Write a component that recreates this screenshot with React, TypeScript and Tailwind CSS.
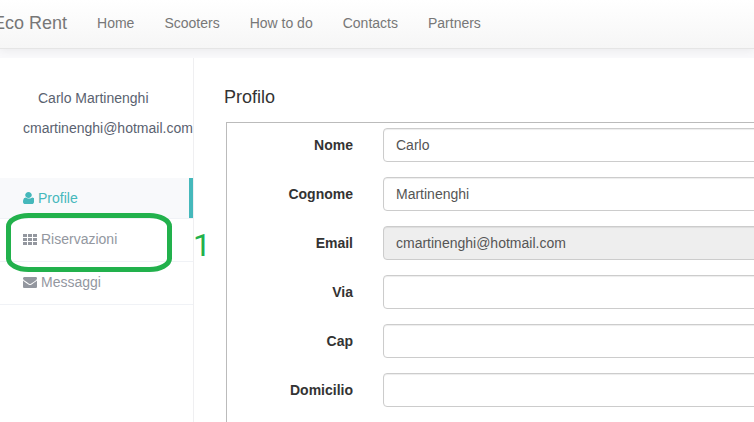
import type { ReactNode } from 'react';

const navLinks = ['Home', 'Scooters', 'How to do', 'Contacts', 'Partners'];

const fields = [
  { id: 'nome', label: 'Nome', value: 'Carlo' },
  { id: 'cognome', label: 'Cognome', value: 'Martinenghi' },
  { id: 'email', label: 'Email', value: 'cmartinenghi@hotmail.com', readOnly: true },
  { id: 'via', label: 'Via', value: '' },
  { id: 'cap', label: 'Cap', value: '' },
  { id: 'domicilio', label: 'Domicilio', value: '' },
];

function UserIcon() {
  return (
    <svg className="h-3 w-[11px]" viewBox="128 128 1280 1536" preserveAspectRatio="none" fill="currentColor" aria-hidden="true">
      <path d="M1408 1405q0 120-73 189.5t-194 69.5h-746q-121 0-194-69.5t-73-189.5q0-53 3.5-103.5t14-109 26.5-108.5 43-97.5 62-81 85.5-53.5 111.5-20q9 0 42 21.5t74.5 48 108 48 133.5 21.5 133.5-21.5 108-48 74.5-48 42-21.5q61 0 111.5 20t85.5 53.5 62 81 43 97.5 26.5 108.5 14 109 3.5 103.5zm-256-893q0 159-112.5 271.5t-271.5 112.5-271.5-112.5-112.5-271.5 112.5-271.5 271.5-112.5 271.5 112.5 112.5 271.5z" />
    </svg>
  );
}

function GridIcon() {
  return (
    <svg className="h-[11px] w-3.5" viewBox="0 0 14 11" fill="currentColor" aria-hidden="true">
      {[0, 4, 8].map((y) =>
        [0, 5, 10].map((x) => <rect key={`${x}-${y}`} x={x} y={y} width="4" height="3" />),
      )}
    </svg>
  );
}

function EnvelopeIcon() {
  return (
    <svg className="h-[11px] w-3.5" viewBox="0 256 1792 1408" fill="currentColor" aria-hidden="true">
      <path d="M1792 710v794q0 66-47 113t-113 47h-1472q-66 0-113-47t-47-113v-794q44 49 101 87 362 246 497 345 57 42 92.5 65.5t94.5 48 110 24.5h2q51 0 110-24.5t94.5-48 92.5-65.5q170-123 498-345 57-39 100-87zm0-294q0 79-49 151t-122 123q-376 261-468 325-10 7-42.5 31t-54 38.5-52 32.5-57.5 27-50 9h-2q-23 0-50-9t-57.5-27-52-32.5-54-38.5-42.5-31q-91-64-262-182.5t-205-142.5q-62-42-117-115.5t-55-136.5q0-78 41.5-130t118.5-52h1472q65 0 112.5 47t47.5 113z" />
    </svg>
  );
}

function MenuItem({ icon, label, active }: { icon: ReactNode; label: string; active?: boolean }) {
  return (
    <li className="border-b border-[#f0f2f6]">
      <a
        href="#"
        className={
          active
            ? 'flex h-10 items-center gap-1 border-r-4 border-[#45b8bb] bg-[#f8f9fb] pl-[23px] text-[#45b8bb]'
            : 'flex h-[42px] items-center gap-1 pb-0.5 pl-[23px] text-[#93979f]'
        }
      >
        {icon}
        {label}
      </a>
    </li>
  );
}

export default function App() {
  return (
    <div className="flex h-screen flex-col overflow-hidden bg-[#f9f9fb] font-['Liberation_Sans',Arial,sans-serif] text-sm text-[#333]">
      <header className="shrink-0 border-b border-[#e5e5e5] bg-linear-to-b from-white to-[#f6f6f6] shadow-[0_2px_8px_rgba(0,0,0,0.06)]">
        <nav className="-ml-[22px] flex h-12 items-center pb-0.5 text-[#777]">
          <a href="#" className="px-[15px] text-lg leading-5">Eco Rent</a>
          {navLinks.map((link) => (
            <a key={link} href="#" className="px-[15px] leading-5">{link}</a>
          ))}
        </nav>
      </header>

      <div className="mt-[9px] flex min-h-0 flex-1">
        <aside className="relative w-[194px] shrink-0 border-r border-[#efeff1] bg-white">
          <div className="pt-[30px] pb-10 text-[#5a6270]">
            <p className="pl-[38px] leading-5">Carlo Martinenghi</p>
            <p className="mt-2.5 pl-[23px] leading-5">cmartinenghi@hotmail.com</p>
          </div>
          <ul>
            <MenuItem icon={<UserIcon />} label="Profile" active />
            <MenuItem icon={<GridIcon />} label="Riservazioni" />
            <MenuItem icon={<EnvelopeIcon />} label="Messaggi" />
          </ul>
          <svg className="pointer-events-none absolute top-[155px] left-1.5 h-[59px] w-[166px]" viewBox="0 0 166 59" fill="none" aria-hidden="true">
            <rect x="2.5" y="2.5" width="161" height="54" rx="20" ry="11" stroke="#22b14c" strokeWidth="5" />
          </svg>
          <span className="absolute top-[169px] left-[193px] font-['Roboto',sans-serif] text-[32px] leading-9 text-[#22b14c]">1</span>
        </aside>

        <main className="min-w-0 flex-1 overflow-hidden bg-white pt-[29px] pl-[30px]">
          <h1 className="text-lg leading-5">Profilo</h1>
          <form className="mt-[15px] -mr-4 ml-0.5 flex h-screen flex-col gap-[15px] border border-[#bbb] pt-[5px]">
            {fields.map((field) => (
              <div key={field.id} className="flex items-center gap-[30px]">
                <label htmlFor={field.id} className="w-[126px] text-right font-bold">{field.label}</label>
                <input
                  id={field.id}
                  defaultValue={field.value}
                  readOnly={field.readOnly}
                  className="h-[34px] min-w-0 flex-1 rounded border border-[#ccc] bg-white px-3 text-[#555] shadow-[inset_0_1px_1px_rgba(0,0,0,0.075)] outline-none read-only:bg-[#eee]"
                />
              </div>
            ))}
          </form>
        </main>
      </div>
    </div>
  );
}
